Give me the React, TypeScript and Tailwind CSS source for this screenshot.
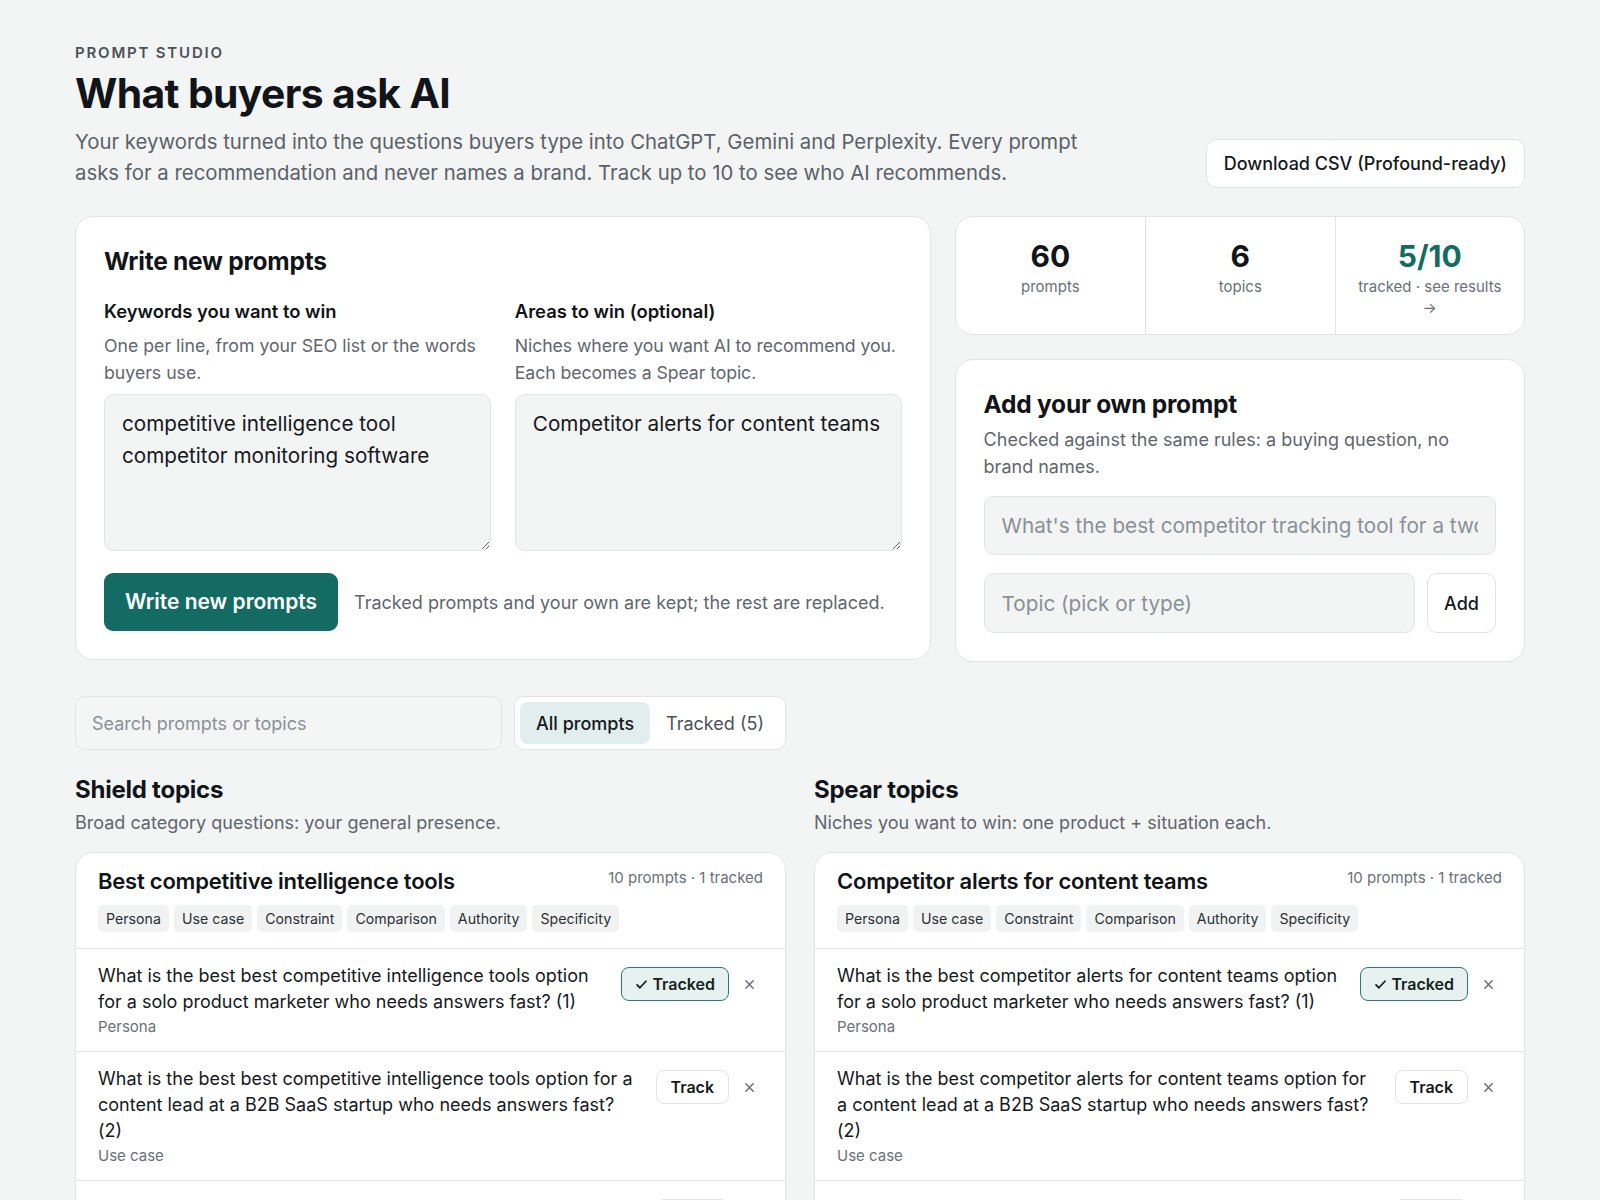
import React from "react";

type Row = { text: string; label: string; tracked: boolean };

const shieldRows: Row[] = [
  {
    text: "What is the best best competitive intelligence tools option for a solo product marketer who needs answers fast? (1)",
    label: "Persona",
    tracked: true,
  },
  {
    text: "What is the best best competitive intelligence tools option for a content lead at a B2B SaaS startup who needs answers fast? (2)",
    label: "Use case",
    tracked: false,
  },
  {
    text: "What is the best best competitive intelligence tools option when budget is tight and setup has to take under a day? (3)",
    label: "Constraint",
    tracked: false,
  },
];

const spearRows: Row[] = [
  {
    text: "What is the best competitor alerts for content teams option for a solo product marketer who needs answers fast? (1)",
    label: "Persona",
    tracked: true,
  },
  {
    text: "What is the best competitor alerts for content teams option for a content lead at a B2B SaaS startup who needs answers fast? (2)",
    label: "Use case",
    tracked: false,
  },
  {
    text: "What is the best competitor alerts for content teams option when budget is tight and setup has to take under a day? (3)",
    label: "Constraint",
    tracked: false,
  },
];

const chips = ["Persona", "Use case", "Constraint", "Comparison", "Authority", "Specificity"];

function TopicCard({ title, rows }: { title: string; rows: Row[] }) {
  return (
    <div className="overflow-hidden rounded-[18px] border border-[#e1e4e4] bg-white">
      <div className="border-b border-[#e6e8e8] px-[22px] pb-[16px] pt-[13px]">
        <div className="flex items-start justify-between gap-4">
          <h3 className="text-[22px] font-semibold leading-[30px] tracking-[-0.01em] text-[#111418]">{title}</h3>
          <span className="pt-[1px] text-[15px] leading-[22px] text-[#6a7078]">10 prompts · 1 tracked</span>
        </div>
        <div className="mt-[9px] flex flex-wrap gap-[5px]">
          {chips.map((c) => (
            <span key={c} className="rounded-[5px] bg-[#f1f3f3] px-[8px] py-[4px] text-[14.2px] leading-[19px] text-[#2b3035]">
              {c}
            </span>
          ))}
        </div>
      </div>
      {rows.map((r, i) => (
        <div key={i} className="flex items-start gap-4 border-b border-[#e6e8e8] px-[22px] pb-[13px] pt-[14px]">
          <div className="min-w-0 flex-1">
            <p className="text-[18px] leading-[26px] text-[#15191d]">{r.text}</p>
            <p className="mt-[1px] text-[15px] leading-[22px] text-[#6a7078]">{r.label}</p>
          </div>
          <div className="mt-[4px] flex items-center gap-[6px]">
            {r.tracked ? (
              <button className="flex h-[34px] items-center gap-[4px] rounded-[8px] border-[1.5px] border-[#2a7a71] bg-[#e7f1ef] px-[13px] text-[16px] font-semibold text-[#152322]">
                <svg width="13" height="13" viewBox="0 0 16 16" fill="none" stroke="currentColor" strokeWidth="2.2" strokeLinecap="round" strokeLinejoin="round">
                  <path d="M2.5 8.5 6 12l7.5-8" />
                </svg>
                Tracked
              </button>
            ) : (
              <button className="h-[34px] rounded-[8px] border border-[#e1e4e4] bg-white px-[14px] text-[16px] font-semibold text-[#15191d]">
                Track
              </button>
            )}
            <button className="flex h-[28px] w-[28px] items-center justify-center text-[#6a7078]">
              <svg width="11" height="11" viewBox="0 0 12 12" fill="none" stroke="currentColor" strokeWidth="1.6" strokeLinecap="round">
                <path d="M2 2l8 8M10 2l-8 8" />
              </svg>
            </button>
          </div>
        </div>
      ))}
    </div>
  );
}

export default function App() {
  return (
    <div className="min-h-screen bg-[#f3f4f4] font-['Inter',sans-serif] text-[#111418]">
      <div className="px-[75px] pb-10 pt-[41px]">
        <header className="flex items-end justify-between gap-8">
          <div>
            <div className="text-[15px] font-semibold leading-[24px] tracking-[0.12em] text-[#4b5258]">PROMPT STUDIO</div>
            <h1 className="mt-[4px] text-[40.8px] font-bold leading-[48px] tracking-[-0.015em] text-[#111418]">What buyers ask AI</h1>
            <p className="mt-[9px] max-w-[1040px] text-[20.35px] leading-[31px] text-[#5a6169]">
              Your keywords turned into the questions buyers type into ChatGPT, Gemini and Perplexity. Every prompt asks for a recommendation and never names a brand. Track up to 10 to see who AI recommends.
            </p>
          </div>
          <button className="mb-[0px] h-[49px] shrink-0 rounded-[10px] border border-[#e1e4e4] bg-white px-[17px] text-[18px] font-medium text-[#15191d]">
            Download CSV (Profound-ready)
          </button>
        </header>

        <div className="mt-7 grid grid-cols-[3fr_2fr] items-start gap-6">
          <section className="rounded-[18px] border border-[#e1e4e4] bg-white p-7">
            <h2 className="text-[24.5px] font-bold leading-[32px] tracking-[-0.01em]">Write new prompts</h2>
            <div className="mt-[21px] grid grid-cols-2 gap-6">
              <div>
                <label className="block text-[18.4px] font-semibold leading-[26px]">Keywords you want to win</label>
                <p className="mt-[8px] text-[17.7px] leading-[27px] text-[#5f666e]">One per line, from your SEO list or the words buyers use.</p>
                <textarea
                  className="mt-[8px] block h-[157px] w-full rounded-[10px] border border-[#e1e4e4] bg-[#f3f4f4] px-[17px] py-[13px] text-[20.7px] leading-[32px] text-[#15191d] outline-none"
                  defaultValue={"competitive intelligence tool\ncompetitor monitoring software"}
                />
              </div>
              <div>
                <label className="block text-[18.4px] font-semibold leading-[26px]">Areas to win (optional)</label>
                <p className="mt-[8px] text-[17.7px] leading-[27px] tracking-[-0.005em] text-[#5f666e]">Niches where you want AI to recommend you. Each becomes a Spear topic.</p>
                <textarea
                  className="mt-[8px] block h-[157px] w-full rounded-[10px] border border-[#e1e4e4] bg-[#f3f4f4] px-[17px] py-[13px] text-[20.7px] leading-[32px] text-[#15191d] outline-none"
                  defaultValue={"Competitor alerts for content teams"}
                />
              </div>
            </div>
            <div className="mt-[22px] flex items-center gap-4">
              <button className="h-[58px] rounded-[9px] bg-[#136b63] px-[21px] text-[21px] font-semibold text-white">Write new prompts</button>
              <span className="text-[18px] text-[#5f666e]">Tracked prompts and your own are kept; the rest are replaced.</span>
            </div>
          </section>

          <div className="flex flex-col gap-6">
            <div className="grid grid-cols-3 rounded-[18px] border border-[#e1e4e4] bg-white">
              <div className="px-4 pb-[16px] pt-[21px] text-center">
                <div className="text-[30px] font-bold leading-[36px]">60</div>
                <div className="mt-[2px] text-[15px] leading-[21px] text-[#6a7078]">prompts</div>
              </div>
              <div className="border-l border-[#e1e4e4] px-4 pb-[16px] pt-[21px] text-center">
                <div className="text-[30px] font-bold leading-[36px]">6</div>
                <div className="mt-[2px] text-[15px] leading-[21px] text-[#6a7078]">topics</div>
              </div>
              <div className="border-l border-[#e1e4e4] px-4 pb-[16px] pt-[21px] text-center">
                <div className="text-[30px] font-bold leading-[36px] text-[#136b63]">5/10</div>
                <div className="mt-[2px] text-[15px] leading-[21px] text-[#6a7078]">
                  tracked · see results
                  <span className="block">→</span>
                </div>
              </div>
            </div>

            <section className="rounded-[18px] border border-[#e1e4e4] bg-white p-7">
              <h2 className="text-[24.5px] font-bold leading-[32px] tracking-[-0.01em]">Add your own prompt</h2>
              <p className="mt-[6px] text-[18px] leading-[27px] text-[#5f666e]">Checked against the same rules: a buying question, no brand names.</p>
              <input
                className="mt-[16px] block h-[59px] w-full rounded-[10px] border border-[#e1e4e4] bg-[#f3f4f4] px-[17px] text-[20.7px] text-[#15191d] outline-none placeholder:text-[#8a9096]"
                placeholder="What's the best competitor tracking tool for a two-person team?"
              />
              <div className="mt-[18px] flex gap-3">
                <input
                  className="block h-[60px] min-w-0 flex-1 rounded-[10px] border border-[#e1e4e4] bg-[#f3f4f4] px-[17px] text-[20.7px] text-[#15191d] outline-none placeholder:text-[#8a9096]"
                  placeholder="Topic (pick or type)"
                />
                <button className="h-[60px] w-[69px] rounded-[10px] border border-[#e1e4e4] bg-white text-[18px] font-medium text-[#15191d]">Add</button>
              </div>
            </section>
          </div>
        </div>

        <div className="mt-[34px] grid grid-cols-2 gap-7">
          <div className="flex gap-3">
            <input
              className="h-[54px] min-w-0 flex-1 rounded-[10px] border border-[#e1e4e4] bg-[#f4f5f5] px-[16px] text-[18px] outline-none placeholder:text-[#8a9096]"
              placeholder="Search prompts or topics"
            />
            <div className="flex h-[54px] items-stretch rounded-[10px] border border-[#e1e4e4] bg-white p-[5px]">
              <button className="rounded-[8px] bg-[#e2eeed] px-[16px] text-[18px] font-medium text-[#15191d]">All prompts</button>
              <button className="px-[16px] text-[18px] text-[#4b5258]">Tracked (5)</button>
            </div>
          </div>
          <div />
        </div>

        <div className="mt-[25px] grid grid-cols-2 gap-7">
          <div>
            <h2 className="text-[24px] font-bold leading-[30px] tracking-[-0.01em]">Shield topics</h2>
            <p className="mt-[5px] text-[18px] leading-[26px] text-[#5f666e]">Broad category questions: your general presence.</p>
            <div className="mt-[16px]">
              <TopicCard title="Best competitive intelligence tools" rows={shieldRows} />
            </div>
          </div>
          <div>
            <h2 className="text-[24px] font-bold leading-[30px] tracking-[-0.01em]">Spear topics</h2>
            <p className="mt-[5px] text-[18px] leading-[26px] text-[#5f666e]">Niches you want to win: one product + situation each.</p>
            <div className="mt-[16px]">
              <TopicCard title="Competitor alerts for content teams" rows={spearRows} />
            </div>
          </div>
        </div>
      </div>
    </div>
  );
}
